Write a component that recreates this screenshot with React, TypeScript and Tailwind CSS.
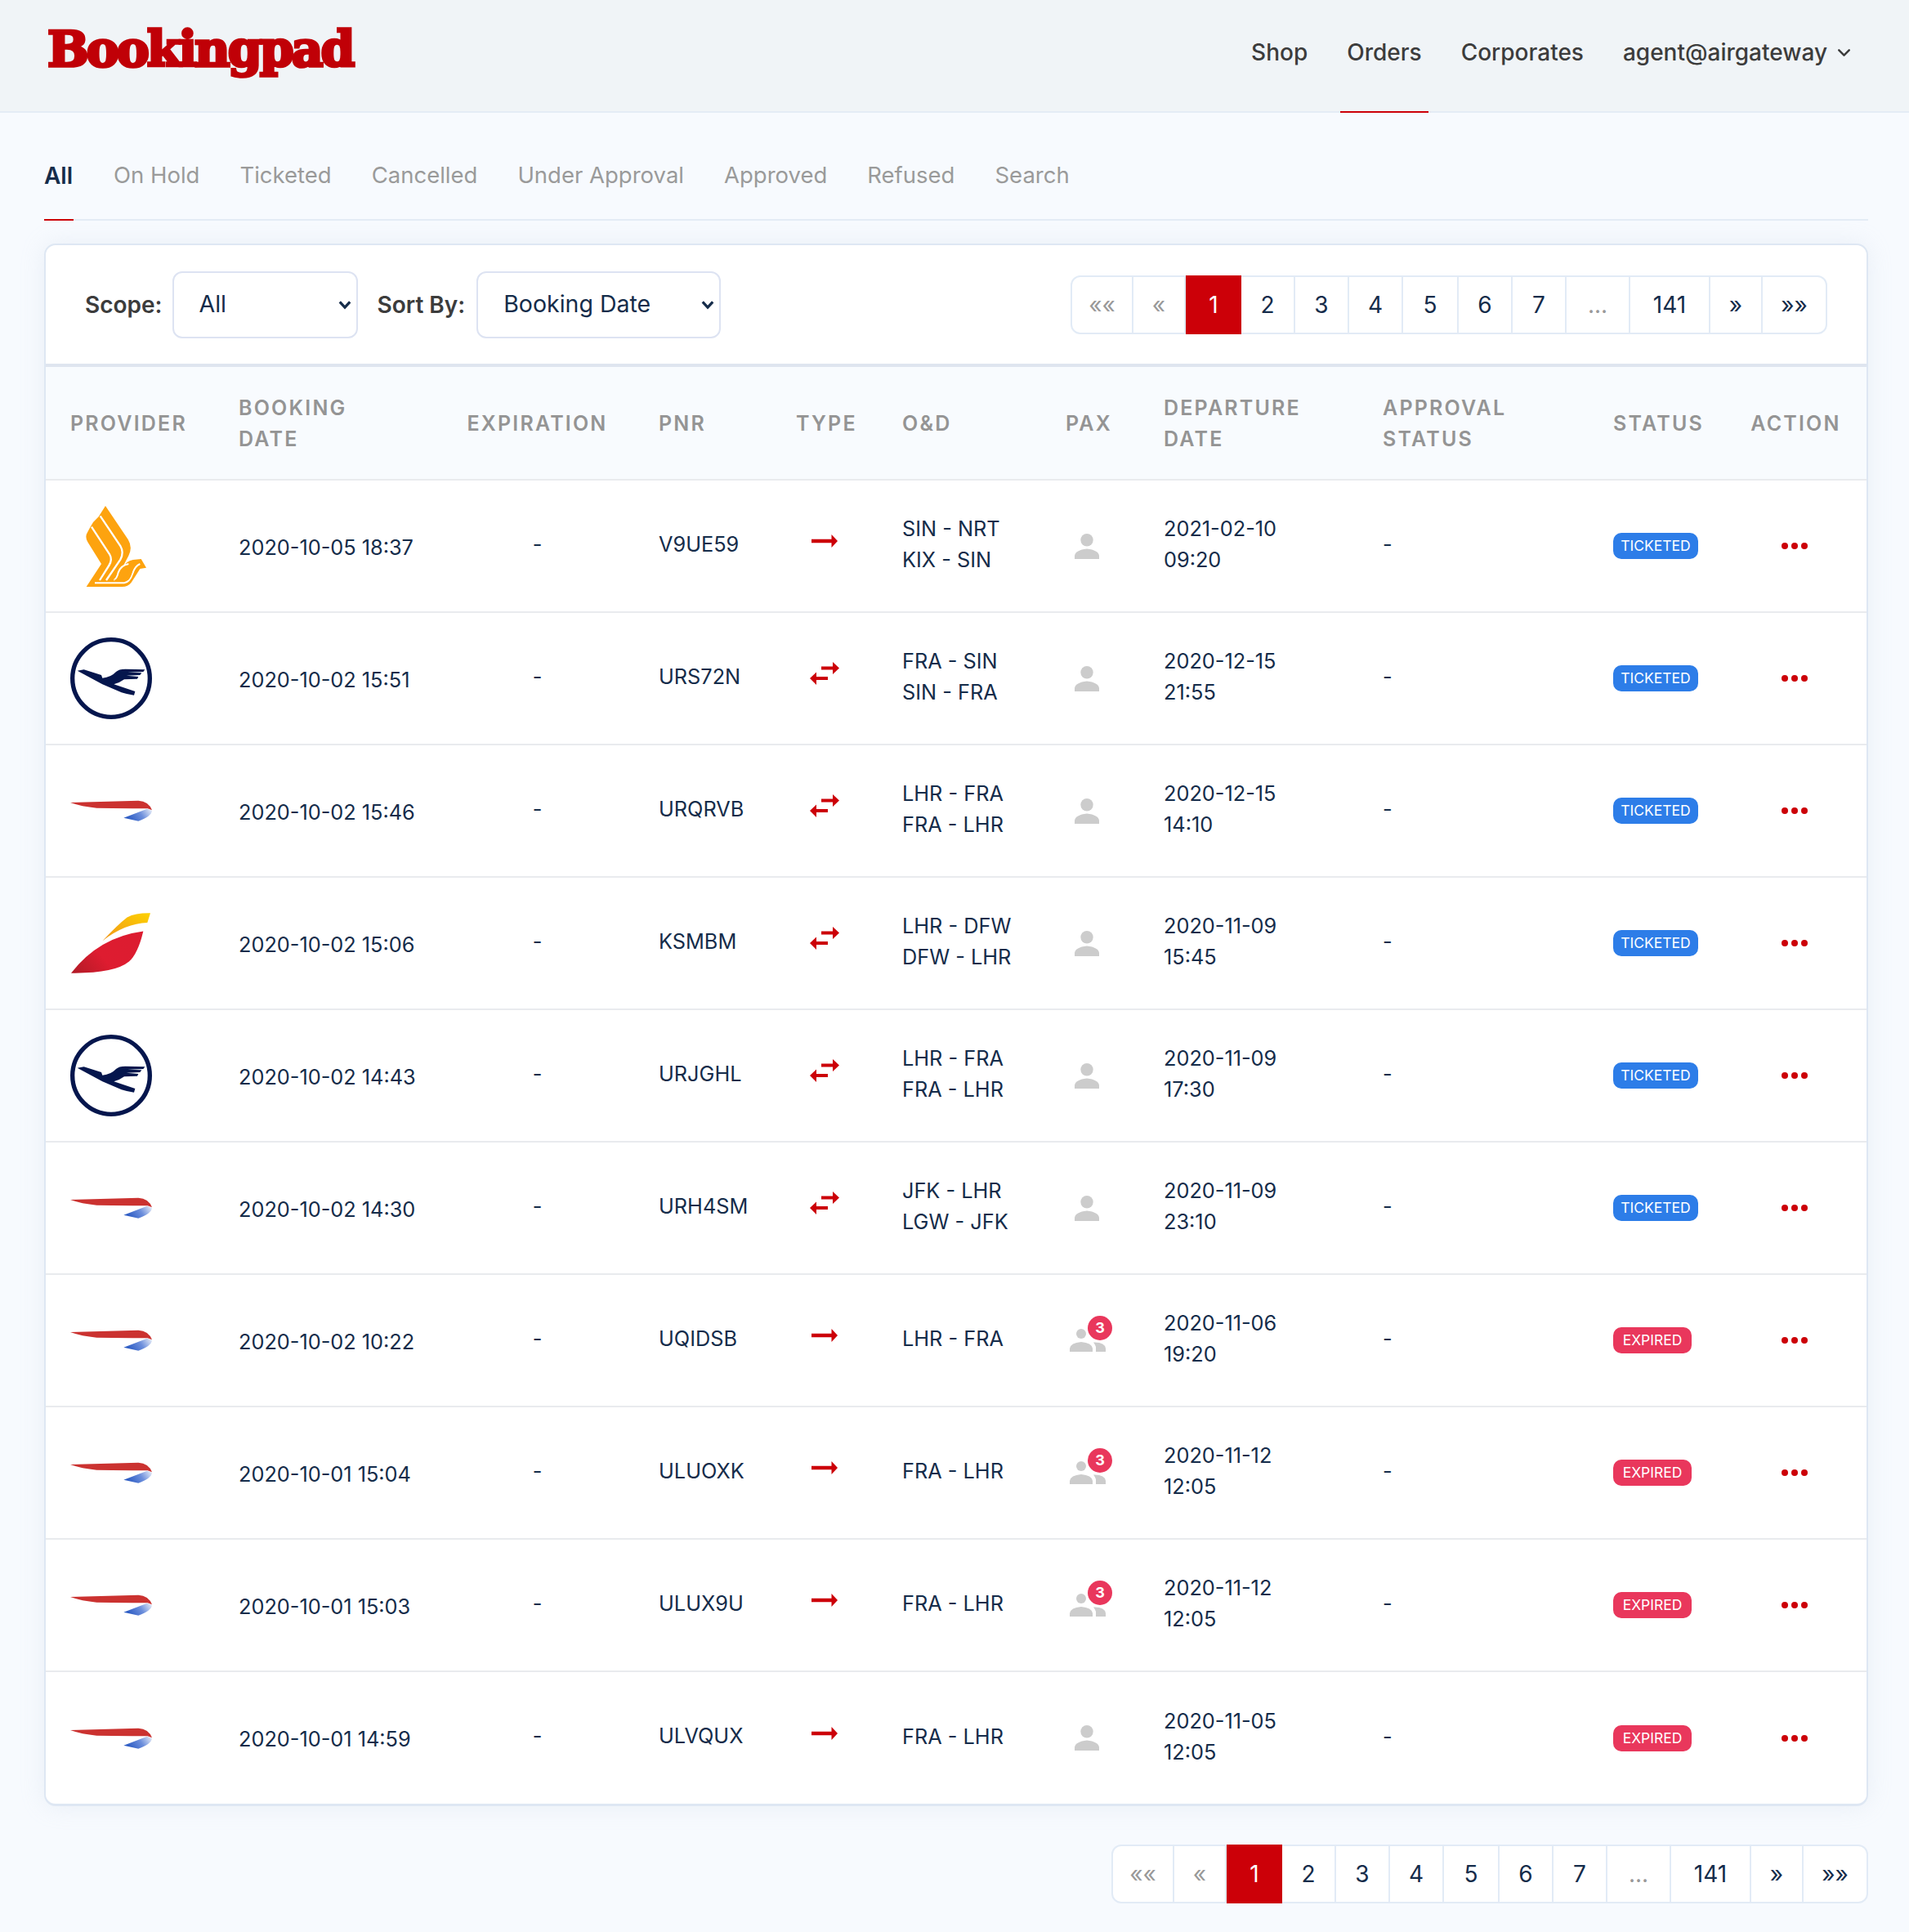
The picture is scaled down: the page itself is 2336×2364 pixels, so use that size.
import { ChevronDown } from "lucide-react";

type Row = {
  logo: "sq" | "lh" | "ba" | "ib";
  booked: string;
  pnr: string;
  trip: "one" | "round";
  route: string[];
  pax: number;
  departure: string[];
  status: "TICKETED" | "EXPIRED";
};

const rows: Row[] = [
  { logo: "sq", booked: "2020-10-05 18:37", pnr: "V9UE59", trip: "one", route: ["SIN - NRT", "KIX - SIN"], pax: 1, departure: ["2021-02-10", "09:20"], status: "TICKETED" },
  { logo: "lh", booked: "2020-10-02 15:51", pnr: "URS72N", trip: "round", route: ["FRA - SIN", "SIN - FRA"], pax: 1, departure: ["2020-12-15", "21:55"], status: "TICKETED" },
  { logo: "ba", booked: "2020-10-02 15:46", pnr: "URQRVB", trip: "round", route: ["LHR - FRA", "FRA - LHR"], pax: 1, departure: ["2020-12-15", "14:10"], status: "TICKETED" },
  { logo: "ib", booked: "2020-10-02 15:06", pnr: "KSMBM", trip: "round", route: ["LHR - DFW", "DFW - LHR"], pax: 1, departure: ["2020-11-09", "15:45"], status: "TICKETED" },
  { logo: "lh", booked: "2020-10-02 14:43", pnr: "URJGHL", trip: "round", route: ["LHR - FRA", "FRA - LHR"], pax: 1, departure: ["2020-11-09", "17:30"], status: "TICKETED" },
  { logo: "ba", booked: "2020-10-02 14:30", pnr: "URH4SM", trip: "round", route: ["JFK - LHR", "LGW - JFK"], pax: 1, departure: ["2020-11-09", "23:10"], status: "TICKETED" },
  { logo: "ba", booked: "2020-10-02 10:22", pnr: "UQIDSB", trip: "one", route: ["LHR - FRA"], pax: 3, departure: ["2020-11-06", "19:20"], status: "EXPIRED" },
  { logo: "ba", booked: "2020-10-01 15:04", pnr: "ULUOXK", trip: "one", route: ["FRA - LHR"], pax: 3, departure: ["2020-11-12", "12:05"], status: "EXPIRED" },
  { logo: "ba", booked: "2020-10-01 15:03", pnr: "ULUX9U", trip: "one", route: ["FRA - LHR"], pax: 3, departure: ["2020-11-12", "12:05"], status: "EXPIRED" },
  { logo: "ba", booked: "2020-10-01 14:59", pnr: "ULVQUX", trip: "one", route: ["FRA - LHR"], pax: 1, departure: ["2020-11-05", "12:05"], status: "EXPIRED" },
];

const tabs = ["All", "On Hold", "Ticketed", "Cancelled", "Under Approval", "Approved", "Refused", "Search"];

const pages = [
  { label: "««", width: "w-[75px]", muted: true },
  { label: "«", width: "w-[64px]", muted: true },
  { label: "1", width: "w-[68px]" },
  { label: "2", width: "w-[66px]" },
  { label: "3", width: "w-[66px]" },
  { label: "4", width: "w-[66px]" },
  { label: "5", width: "w-[68px]" },
  { label: "6", width: "w-[66px]" },
  { label: "7", width: "w-[66px]" },
  { label: "...", width: "w-[78px]", muted: true },
  { label: "141", width: "w-[98px]" },
  { label: "»", width: "w-[64px]" },
  { label: "»»", width: "w-[77px]" },
];

const SingaporeLogo = () => (
  <svg viewBox="165 85 222 297" className="ml-[19px] h-[99px] w-[74px]">
    <path
      fill="#fda30f"
      d="M237 85 L320 208 Q338 238 322 268 L298 314 Q312 288 338 283 L368 280 L387 312 L364 316 Q348 342 332 366 Q320 382 298 382 L167 382 L222 298 L172 218 Q160 198 172 180 L180 165 L192 145 L212 125 Z"
    />
    <g fill="none" stroke="#fff" strokeWidth="7">
      <path d="M218 122 L292 232 Q306 256 292 282 L240 358" />
      <path d="M186 162 L252 262 Q264 282 250 304 L216 358" />
      <path d="M198 368 L306 368 Q326 366 338 330 Q346 306 364 298" strokeWidth="6" />
      <path d="M268 358 Q280 350 284 330 Q292 304 322 298" strokeWidth="6" />
    </g>
    <path fill="#fda30f" d="M262 358 L320 358 Q330 350 336 326 L322 322 Q312 350 296 352 Z" />
  </svg>
);

const LufthansaLogo = () => (
  <svg viewBox="108 570 300 300" className="h-[100px] w-[100px]">
    <circle cx="258" cy="720" r="142" fill="#fff" stroke="#05164d" strokeWidth="16" />
    <path
      fill="#05164d"
      d="M134 692 L158 688 L222 708 L226 719 Q258 716 276 696 Q286 686 310 686 L382 688 L376 696 L318 698 L370 700 L364 708 L314 710 L358 714 L354 722 L306 724 Q290 736 268 742 L346 768 L342 782 Q320 780 296 772 L226 742 Z"
    />
  </svg>
);

const BritishAirwaysLogo = () => (
  <svg viewBox="108 116 300 78" className="h-[26px] w-[100px]">
    <defs>
      <linearGradient id="baBlue" x1="0" x2="1" y1="0.6" y2="0.3">
        <stop offset="0.1" stopColor="#2e5dc4" />
        <stop offset="0.6" stopColor="#6d8fdc" />
        <stop offset="1" stopColor="#d9e2f5" />
      </linearGradient>
    </defs>
    <path fill="#cb3230" d="M108 125 L358 118 Q396 120 408 153 L392 147 Q330 146 205 145 Q150 140 108 125 Z" />
    <path fill="url(#baBlue)" d="M304 181 L390 148 L408 155 Q406 176 358 193 Z" />
  </svg>
);

const IberiaLogo = () => (
  <svg viewBox="113 530 290 221" className="ml-[1px] h-[74px] w-[97px]">
    <defs>
      <linearGradient id="ibRed" x1="0" x2="1" y1="1" y2="0.5">
        <stop offset="0" stopColor="#b01a26" />
        <stop offset="0.5" stopColor="#de1c30" />
        <stop offset="1" stopColor="#dc1c30" />
      </linearGradient>
      <linearGradient id="ibGold" x1="0" x2="1" y1="1" y2="0">
        <stop offset="0" stopColor="#f0951a" />
        <stop offset="1" stopColor="#fdd100" />
      </linearGradient>
    </defs>
    <path fill="url(#ibRed)" d="M113 750 Q215 618 377 597 Q358 678 325 708 Q272 752 113 750 Z" />
    <path fill="url(#ibGold)" d="M228 632 Q282 574 318 546 Q350 530 403 531 L392 566 Q312 568 228 632 Z" />
  </svg>
);

const Logo = ({ kind }: { kind: Row["logo"] }) => {
  if (kind === "sq") return <SingaporeLogo />;
  if (kind === "lh") return <LufthansaLogo />;
  if (kind === "ib") return <IberiaLogo />;
  return <BritishAirwaysLogo />;
};

const TripIcon = ({ trip }: { trip: Row["trip"] }) =>
  trip === "one" ? (
    <svg viewBox="0 0 32 16" className="h-[16px] w-[32px] fill-[#cc0008]">
      <path d="M0 5.8 H24.5 V0 L32 8 L24.5 16 V10.2 H0 Z" />
    </svg>
  ) : (
    <svg viewBox="0 0 36 28" className="h-[28px] w-[36px] fill-[#cc0008]">
      <path d="M14 5.6 H28 V0 L36 7.5 L28 15 V9.6 H14 Z" />
      <path d="M22 18 H8 V12.6 L0 20 L8 28 V22 H22 Z" />
    </svg>
  );

const PaxIcon = ({ count }: { count: number }) =>
  count === 1 ? (
    <svg viewBox="0 0 30 31" className="h-[31px] w-[30px] fill-[#cccccc]">
      <circle cx="15" cy="7.7" r="7.7" />
      <path d="M0 31 V27 Q1 20 15 18.5 Q29 20 30 27 V31 Z" />
    </svg>
  ) : (
    <div className="relative mb-[16px] ml-[8px] h-[44px] w-[52px]">
      <svg viewBox="0 0 44 28" className="absolute bottom-0 left-0 h-[28px] w-[44px] fill-[#cccccc]">
        <circle cx="14" cy="6" r="6" />
        <path d="M0 28 V24 Q1 17 14 16 Q27 17 28 24 V28 Z" />
        <path d="M32 28 V22 Q31 19 29 16.5 Q43 16 44 24 V28 Z" />
      </svg>
      <span className="absolute left-[22px] top-0 flex h-[30px] w-[30px] items-center justify-center rounded-full bg-[#e9375c] text-[18px] font-bold text-white">
        {count}
      </span>
    </div>
  );

const Pagination = () => (
  <div className="flex h-[72px] rounded-[12px] border-2 border-[#e2ebf6] bg-white text-[28px] text-[#152c4a]">
    {pages.map((page) => {
      const active = page.label === "1";
      return (
        <span
          key={page.label}
          className={`${page.width} ${
            active
              ? "-my-[2px] flex items-center justify-center bg-[#cc0008] text-white"
              : page.muted
                ? "flex items-center justify-center border-r-2 border-[#e2ebf6] text-[#999999]"
                : "flex items-center justify-center border-r-2 border-[#e2ebf6] last:border-r-0"
          }`}
        >
          {page.label}
        </span>
      );
    })}
  </div>
);

const SelectBox = ({ value, width }: { value: string; width: string }) => (
  <div className={`relative ${width}`}>
    <select
      defaultValue={value}
      className="h-[82px] w-full appearance-none rounded-[12px] border-2 border-[#dde3f2] bg-white pl-[31px] text-[28.5px] text-[#152c4a]"
    >
      <option>{value}</option>
    </select>
    <svg viewBox="0 0 18 12" className="pointer-events-none absolute right-[8px] top-[35px] h-[12px] w-[16px]">
      <path d="M2 2 L9 9.5 L16 2" fill="none" stroke="#152c4a" strokeWidth="3.6" />
    </svg>
  </div>
);

const headers: [string, string][] = [
  ["PROVIDER", "text-left"],
  ["BOOKING\nDATE", "text-left"],
  ["EXPIRATION", "text-center"],
  ["PNR", "text-left"],
  ["TYPE", "text-center"],
  ["O&D", "text-left"],
  ["PAX", "text-center"],
  ["DEPARTURE\nDATE", "text-left"],
  ["APPROVAL\nSTATUS", "text-left"],
  ["STATUS", "text-left"],
  ["ACTION", "text-center"],
];

export default function App() {
  return (
    <div className="min-h-[2364px] bg-[#f7fafe] font-['Inter',sans-serif] text-[#152c4a]">
      <header className="flex h-[138px] items-stretch justify-between border-b-2 border-[#e4ecf5] bg-[#f0f4f7] pl-[58px] pr-[67px]">
        <div className="pt-[18px] font-['DejaVu_Serif',serif] text-[60px] font-bold leading-[84px] tracking-[-3px] text-[#c00007] [-webkit-text-stroke:3.5px_#c00007]">
          Bookingpad
        </div>
        <nav className="-mb-[2px] flex items-stretch gap-[32px] text-[28px] font-medium text-[#3c3c3c]">
          <a className="flex items-center px-[8px] pb-[10px]">Shop</a>
          <a className="flex items-center border-b-2 border-[#cc0008] px-[8px] pb-[8px]">Orders</a>
          <a className="flex items-center px-[8px] pb-[10px]">Corporates</a>
          <a className="flex items-center gap-[8px] pb-[10px] pl-[8px]">
            agent@airgateway
            <ChevronDown className="h-[25px] w-[25px]" strokeWidth={2.4} />
          </a>
        </nav>
      </header>

      <main className="pl-[54px] pr-[50px]">
        <div className="flex h-[132px] gap-[49px] border-b-2 border-[#e4ecf5] pt-[56px] text-[27.5px] text-[#9a9a9a]">
          {tabs.map((tab, index) => (
            <span
              key={tab}
              className={
                index === 0
                  ? "-mb-[2px] h-[76px] w-[36px] border-b-2 border-[#cc0008] text-[28px] font-semibold text-[#152c4a]"
                  : "h-[76px]"
              }
            >
              {tab}
            </span>
          ))}
        </div>

        <section className="mt-[28px] overflow-hidden rounded-[14px] border-2 border-b-[3px] border-[#dee7f3] bg-white shadow-[0_0_30px_rgba(180,195,215,0.2)]">
          <div className="flex h-[149px] items-center justify-between border-b-[4px] border-[#dfe5ef] pl-[48px] pr-[48px]">
            <div className="flex items-center text-[28px]">
              <label className="mr-[12px] font-semibold text-[#3c3c3c]">Scope:</label>
              <SelectBox value="All" width="w-[227px]" />
              <label className="ml-[24px] mr-[14px] font-semibold text-[#3c3c3c]">Sort By:</label>
              <SelectBox value="Booking Date" width="w-[299px]" />
            </div>
            <Pagination />
          </div>

          <table className="w-full table-fixed border-collapse text-[25.3px] leading-[38px]">
            <colgroup>
              <col className="w-[206px]" />
              <col className="w-[277px]" />
              <col className="w-[237px]" />
              <col className="w-[168px]" />
              <col className="w-[130px]" />
              <col className="w-[197px]" />
              <col className="w-[123px]" />
              <col className="w-[268px]" />
              <col className="w-[282px]" />
              <col className="w-[167px]" />
              <col />
            </colgroup>
            <thead>
              <tr className="h-[138px] border-b-2 border-[#e9ebee] bg-[#f8fbfe]">
                {headers.map(([label, align]) => (
                  <th
                    key={label}
                    className={`whitespace-pre-line px-[30px] text-[25px] font-semibold tracking-[2.2px] text-[#949494] ${align}`}
                  >
                    {label}
                  </th>
                ))}
              </tr>
            </thead>
            <tbody>
              {rows.map((row) => (
                <tr key={row.pnr} className="h-[162px] border-b-2 border-[#e9ebee] last:border-b-0">
                  <td className="px-[30px]">
                    <Logo kind={row.logo} />
                  </td>
                  <td className="px-[30px] pt-[3px]">{row.booked}</td>
                  <td className="px-[30px] pb-[5px] text-center">-</td>
                  <td className="px-[30px] pb-[5px]">{row.pnr}</td>
                  <td className="px-[30px] pb-[12px]">
                    <div className="flex justify-center">
                      <TripIcon trip={row.trip} />
                    </div>
                  </td>
                  <td className="px-[30px] pb-[4px]">
                    {row.route.map((leg) => (
                      <div key={leg}>{leg}</div>
                    ))}
                  </td>
                  <td className="pl-[30px] pr-[35px]">
                    <div className="flex justify-center">
                      <PaxIcon count={row.pax} />
                    </div>
                  </td>
                  <td className="px-[30px] pb-[4px]">
                    {row.departure.map((part) => (
                      <div key={part}>{part}</div>
                    ))}
                  </td>
                  <td className="px-[30px] pb-[4px]">-</td>
                  <td className="px-[30px]">
                    <div
                      className={
                        row.status === "TICKETED"
                          ? "flex h-[32px] w-[104px] items-center justify-center rounded-[10px] bg-[#2d7de8] text-[17.5px] text-white"
                          : "flex h-[32px] w-[96px] items-center justify-center rounded-[10px] bg-[#e9375c] text-[17.5px] text-white"
                      }
                    >
                      {row.status}
                    </div>
                  </td>
                  <td className="pl-[28px] pr-[32px]">
                    <div className="flex justify-center gap-[4px]">
                      <span className="h-[8px] w-[8px] rounded-full bg-[#cc0008]" />
                      <span className="h-[8px] w-[8px] rounded-full bg-[#cc0008]" />
                      <span className="h-[8px] w-[8px] rounded-full bg-[#cc0008]" />
                    </div>
                  </td>
                </tr>
              ))}
            </tbody>
          </table>
        </section>

        <div className="mt-[47px] flex justify-end">
          <Pagination />
        </div>
      </main>
    </div>
  );
}
